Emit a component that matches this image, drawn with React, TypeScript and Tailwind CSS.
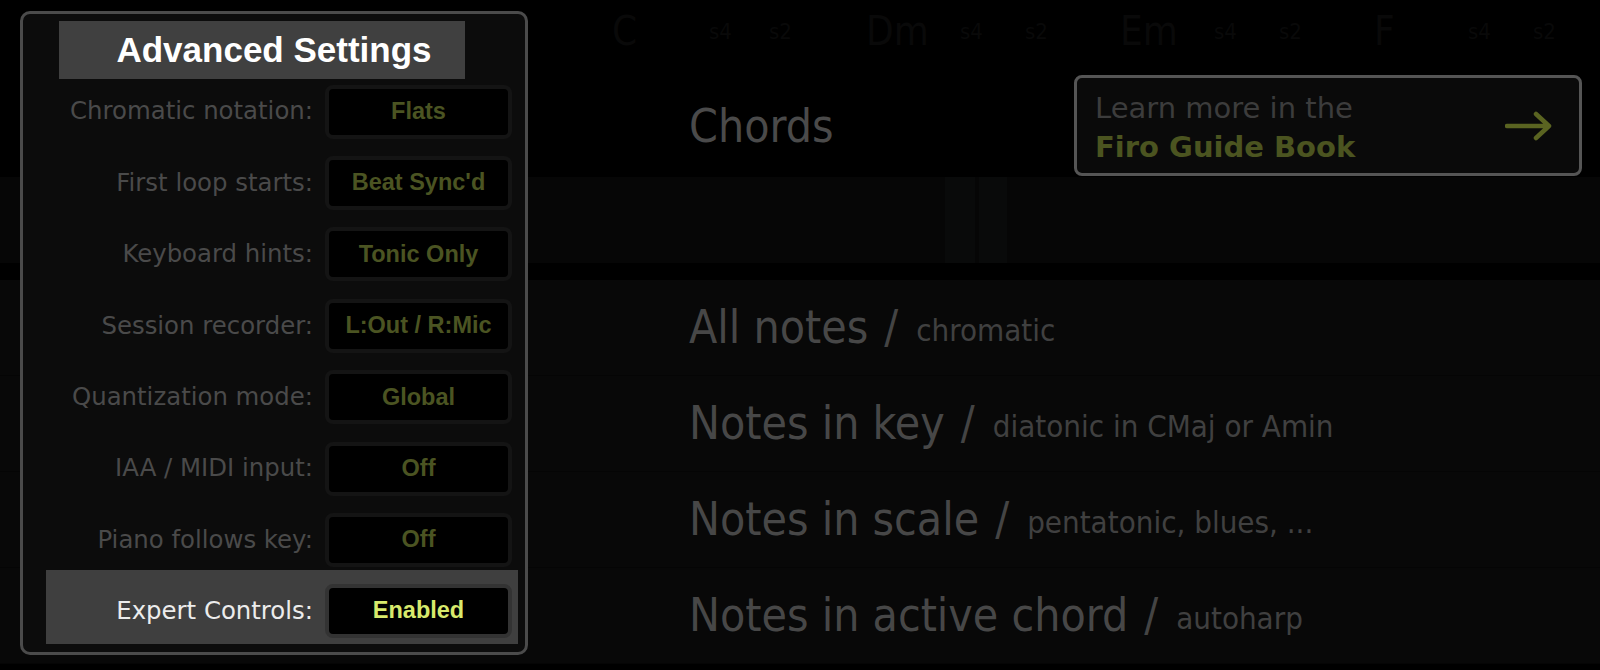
const settings = [
  { label: "Chromatic notation:", value: "Flats" },
  { label: "First loop starts:", value: "Beat Sync'd" },
  { label: "Keyboard hints:", value: "Tonic Only" },
  { label: "Session recorder:", value: "L:Out / R:Mic" },
  { label: "Quantization mode:", value: "Global" },
  { label: "IAA / MIDI input:", value: "Off" },
  { label: "Piano follows key:", value: "Off" },
];

const chordStrip = [
  { text: "C", big: true, w: "w-[97px]" },
  { text: "s4", big: false, w: "w-[60px]" },
  { text: "s2", big: false, w: "w-[97px]" },
  { text: "Dm", big: true, w: "w-[94px]" },
  { text: "s4", big: false, w: "w-[65px]" },
  { text: "s2", big: false, w: "w-[95px]" },
  { text: "Em", big: true, w: "w-[94px]" },
  { text: "s4", big: false, w: "w-[65px]" },
  { text: "s2", big: false, w: "w-[95px]" },
  { text: "F", big: true, w: "w-[94px]" },
  { text: "s4", big: false, w: "w-[65px]" },
  { text: "s2", big: false, w: "w-[40px]" },
];

const noteModes = [
  { title: "All notes", sub: "chromatic" },
  { title: "Notes in key", sub: "diatonic in CMaj or Amin" },
  { title: "Notes in scale", sub: "pentatonic, blues, ..." },
  { title: "Notes in active chord", sub: "autoharp" },
];

const ValueBox = ({ value, active }: { value: string; active?: boolean }) => (
  <div
    className={`w-[187px] h-[54px] rounded-[8px] border-4 ${
      active ? "border-[#333333]" : "border-[#141414]"
    } bg-black flex items-center justify-center`}
  >
    <span
      className={`font-['Liberation_Sans',Arial,sans-serif] font-bold text-[23.5px] ${
        active ? "text-[#d8ea6c]" : "text-[#4b5422]"
      }`}
    >
      {value}
    </span>
  </div>
);

const ArrowRight = () => (
  <svg width="48" height="30" viewBox="0 0 48 30" fill="none">
    <path
      d="M2 15 H44 M31 3 L44 15 L31 27"
      stroke="#5a6421"
      strokeWidth="4.5"
      strokeLinecap="round"
      strokeLinejoin="round"
    />
  </svg>
);

export default function App() {
  return (
    <div className="relative w-[1600px] h-[670px] bg-black overflow-hidden">
      {/* dimmed app behind the dialog */}
      <div className="flex flex-col h-full font-['DejaVu_Sans_Condensed','DejaVu_Sans',sans-serif] font-stretch-condensed">
        <div className="h-[62px] flex items-center pl-[612px] text-[#090909]">
          {chordStrip.map((c, i) => (
            <span
              key={i}
              className={`${c.w} ${c.big ? "text-[40px]" : "text-[22px]"}`}
            >
              {c.text}
            </span>
          ))}
        </div>

        <div className="h-[115px] flex items-start">
          <div className="w-[689px]" />
          <div className="flex-1 pt-[38px] text-[46px] leading-[52px] text-[#4a4a4a]">
            Chords
          </div>
          <div className="mt-[13px] mr-[18px] w-[508px] h-[101px] rounded-[8px] border-[3px] border-[#555555] bg-[#0a0a0a] flex items-center justify-between pl-[18px] pr-[26px] font-['DejaVu_Sans',sans-serif] font-stretch-normal">
            <div className="flex flex-col text-[29px] leading-[39px] pt-[4px]">
              <span className="text-[#3c3c3c]">Learn more in the</span>
              <span className="font-bold text-[#4b5420]">Firo Guide Book</span>
            </div>
            <ArrowRight />
          </div>
        </div>

        <div className="h-[86px] flex bg-[#060606]">
          <div className="w-[945px]" />
          <div className="w-[30px] bg-[#090a0a]" />
          <div className="w-[4px]" />
          <div className="w-[28px] bg-[#090a0a]" />
          <div className="flex-1" />
        </div>
        <div className="h-[17px]" />

        <div className="flex flex-col">
          {noteModes.map((m) => (
            <div
              key={m.title}
              className="h-[96px] flex items-center pl-[689px] bg-[#080808] border-b border-[#050505] text-[#474747]"
            >
              <span className="text-[46px]">{m.title}</span>
              <span className="text-[46px] ml-[16px] mr-[18px] text-[#444444]">/</span>
              <span className="text-[31px] mt-[6px] text-[#404040]">{m.sub}</span>
            </div>
          ))}
        </div>
      </div>

      {/* Advanced Settings dialog */}
      <div className="absolute left-[20px] top-[11px] w-[508px] h-[644px] rounded-[10px] border-[3px] border-[#4b4b4b] bg-[#0c0c0c] flex flex-col">
        <div className="ml-[36px] mt-[7px] w-[406px] h-[58px] bg-[#404040] flex items-center justify-center pl-[24px]">
          <span className="font-['Liberation_Sans',Arial,sans-serif] font-bold text-[35px] text-white">
            Advanced Settings
          </span>
        </div>

        <div className="flex flex-col -mt-[3px]">
          {settings.map((s) => (
            <div key={s.label} className="h-[71.4px] flex items-center pr-[13px] gap-[12px]">
              <span className="flex-1 text-right font-['DejaVu_Sans',sans-serif] text-[24.4px] text-[#4a4a4a]">
                {s.label}
              </span>
              <ValueBox value={s.value} />
            </div>
          ))}
          <div className="-mt-[6px] ml-[23px] mr-[7px] h-[74px] bg-[#3f3f3f] flex items-start pt-[14px] pr-[6px] gap-[12px]">
            <span className="flex-1 text-right font-['DejaVu_Sans',sans-serif] text-[24.4px] leading-[54px] text-[#ececec]">
              Expert Controls:
            </span>
            <ValueBox value="Enabled" active />
          </div>
        </div>
      </div>
    </div>
  );
}
